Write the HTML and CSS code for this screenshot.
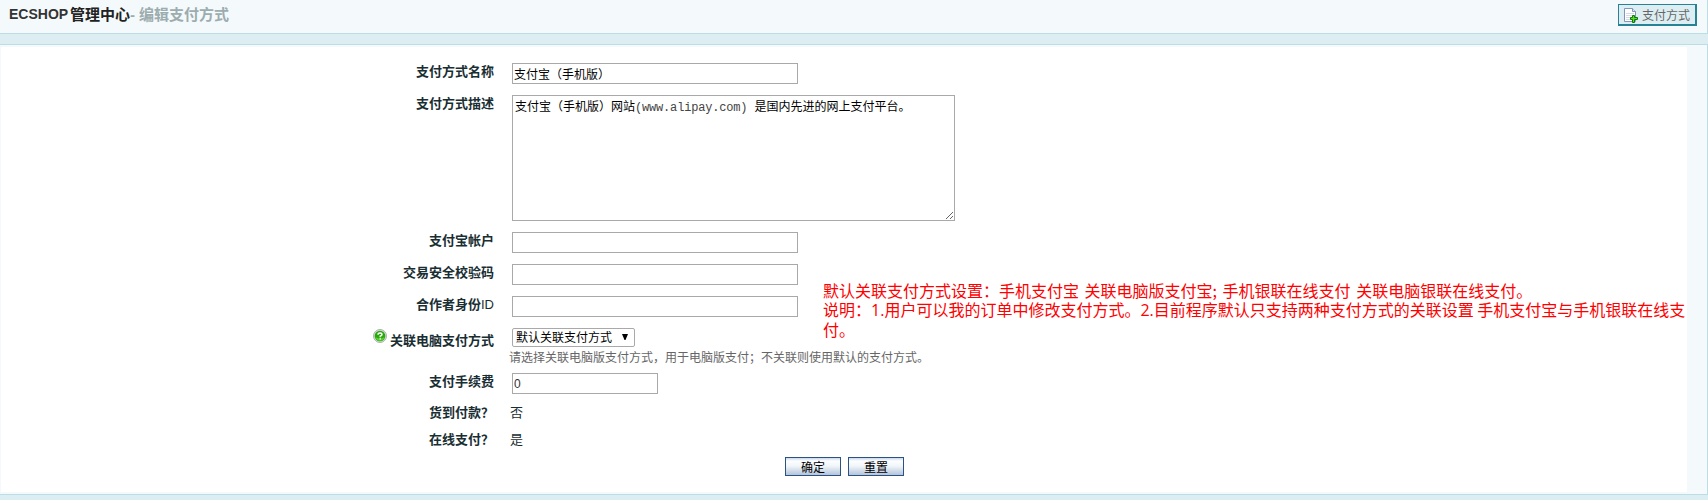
FILE: index.html
```html
<!DOCTYPE html>
<html lang="zh-CN">
<head>
<meta charset="utf-8">
<title>ECSHOP 管理中心 - 编辑支付方式</title>
<link rel="stylesheet" href="styles.css">
</head>
<body>
<header class="topbar">
  <h1 class="title"><span class="brand">ECSHOP</span><span class="site">管理中心</span><span class="crumb"><span class="dash">-</span>编辑支付方式</span></h1>
  <a class="action">
    <svg class="action-icon" width="14" height="15" viewBox="0 0 14 15">
      <path d="M.5.5h8l3 3v10H.5z" fill="#fff" stroke="#8094bd"/>
      <path d="M8.500.5v3h3" fill="#dfe5f3" stroke="#8094bd"/>
      <path d="M2 5.500h8M2 7.500h6M2 9.500h4M2 11.500h4" stroke="#d3d9e5"/>
      <path d="M8.500 7.500h2v2h3v2h-3v3h-2v-3h-2v-2h2z" fill="#5ddd20" stroke="#087a08"/>
    </svg>
    <span>支付方式</span>
  </a>
</header>
<main class="panel">
  <form class="form">
    <div class="row"><label class="label">支付方式名称</label><div class="field"><input class="input" type="text" value="支付宝（手机版）"></div></div>
    <div class="row row-desc"><label class="label">支付方式描述</label><div class="field"><div class="textarea" role="textbox">支付宝（手机版）网站<span class="mono">(www.alipay.com) </span>是国内先进的网上支付平台。</div></div></div>
    <div class="row"><label class="label">支付宝帐户</label><div class="field"><input class="input" type="text"></div></div>
    <div class="row"><label class="label">交易安全校验码</label><div class="field"><input class="input" type="text"></div></div>
    <div class="row"><label class="label">合作者身份<span class="latin">ID</span></label><div class="field"><input class="input" type="text"></div></div>
    <div class="row row-link">
      <label class="label">
        <svg class="help" width="14" height="14" viewBox="0 0 14 14">
          <circle cx="7" cy="7" r="6.500" fill="#d5dcd5" stroke="#a9b3ab"/>
          <circle cx="7" cy="7" r="5.300" fill="#28a80c"/>
          <path d="M2.500 8a4.600 4.600 0 0 0 9 0q-4.500 3-9 0z" fill="#5cd32c"/>
          <path d="M5 5.700Q5 4 7 4t2 1.500Q9 6.600 7.200 7.200V8.200M7.200 9.200v1.300" fill="none" stroke="#fff" stroke-width="1.400"/>
        </svg>关联电脑支付方式</label>
      <div class="field">
        <div class="select"><span>默认关联支付方式</span><svg class="arrow" width="6" height="6" viewBox="0 0 6 6"><path d="M0 0h6L3.500 6h-1z"/></svg></div>
        <p class="hint">请选择关联电脑版支付方式，用于电脑版支付；不关联则使用默认的支付方式。</p>
      </div>
    </div>
    <div class="row"><label class="label">支付手续费</label><div class="field"><input class="input input-short" type="text" value="0"></div></div>
    <div class="row row-text"><span class="label">货到付款？</span><div class="field">否</div></div>
    <div class="row row-text"><span class="label">在线支付？</span><div class="field">是</div></div>
    <div class="buttons"><button class="button" type="button">确定</button><button class="button" type="button">重置</button></div>
  </form>
  <div class="note">
    <p class="note-first">默认关联支付方式设置：手机支付宝 关联电脑版支付宝; 手机银联在线支付 关联电脑银联在线支付。</p>
    <p>说明：<span class="num">1.</span>用户可以我的订单中修改支付方式。<span class="num">2.</span>目前程序默认只支持两种支付方式的关联设置 手机支付宝与手机银联在线支</p>
    <p>付。</p>
  </div>
</main>
</body>
</html>
```
FILE: styles.css
```css
* { box-sizing: border-box; }
body {
  margin: 0;
  height: 500px;
  overflow: hidden;
  background: #ddeef2;
  color: #192e32;
  font: 13px/16px "Liberation Sans", "Noto Sans CJK SC", sans-serif;
}
p { margin: 0; }
.topbar {
  display: flex;
  justify-content: space-between;
  height: 34px;
  padding: 4px 10px 0 9px;
  background: #f4fafb;
  border-right: 1px solid #bbdde5;
  border-bottom: 1px solid #bbdde5;
}
.title {
  display: flex;
  margin: 0;
  font-size: 15px;
  line-height: 21px;
  white-space: nowrap;
}
.brand { width: 61px; font-size: 14px; color: #333; }
.site { color: #222; }
.crumb { display: flex; color: #9cacaf; }
.dash { width: 9px; }
.action {
  display: flex;
  gap: 4px;
  width: 79px;
  height: 22px;
  padding: 3px 0 0 5px;
  background: #ddeef2;
  border: 1px solid #278296;
  border-right-width: 2px;
  border-bottom-width: 2px;
  color: #666;
  font-size: 12px;
  white-space: nowrap;
}
.action span { line-height: 16px; }
.panel {
  position: relative;
  height: 451px;
  margin-top: 10px;
  padding: 2px 20px 2px 1px;
  background: #f4fafb;
  border: 1px solid #bbdde5;
  border-left: 0;
}
.form { height: 445px; padding-top: 11px; background: #fff; }
.row { display: flex; height: 32px; }
.row-desc { height: 137px; }
.row-link { height: 45px; }
.row-text { height: 27px; }
.label {
  width: 493px;
  padding-top: 6px;
  font-weight: bold;
  text-align: right;
  white-space: nowrap;
}
.latin { font-weight: normal; }
.row-link .label { display: flex; justify-content: flex-end; gap: 3px; padding-top: 10px; }
.help { margin-top: -4px; }
.field { padding: 5px 0 0 18px; }
.row-text .label { padding-top: 5px; }
.row-text .field { padding-left: 16px; }
.input, .textarea {
  display: block;
  margin: 0;
  border: 1px solid #a9a9a9;
  border-radius: 0;
  background: #fff;
  color: #000;
  font: 12px/15px "Liberation Sans", "Noto Sans CJK SC", sans-serif;
}
.input { width: 286px; height: 21px; padding: 1px 1px; }
.input-short { width: 146px; padding-top: 2px; color: #333; }
.textarea {
  width: 443px;
  height: 126px;
  padding: 4px 2px;
  overflow: auto;
  resize: both;
}
.mono {
  color: #444;
  font-family: "Liberation Mono", monospace;
  letter-spacing: -0.18px;
  white-space: pre;
}
.select {
  display: flex;
  align-items: center;
  gap: 10px;
  width: 123px;
  height: 19px;
  padding-left: 3px;
  border: 1px solid #a9a9a9;
  border-radius: 2px;
  color: #000;
  font-size: 12px;
  white-space: nowrap;
}
.select span { padding-top: 1px; }
.arrow { margin-top: -1px; }
.hint { margin: 3px 0 0 -3px; color: #666; font-size: 12px; white-space: nowrap; }
.buttons { display: flex; gap: 7px; padding: 3px 0 0 784px; }
.button {
  width: 56px;
  height: 19px;
  padding: 3px 0 0;
  border: 1px solid #2c5283;
  border-radius: 0;
  background: linear-gradient(#c8d8ed 0, #fdfeff 3px, #f1f6f9 8px, #b3c4dc 17px);
  color: #000;
  font: 12px/14px "Liberation Sans", "Noto Sans CJK SC", sans-serif;
}
/* Annotation laid over the right side of the form */
.note {
  position: absolute;
  left: 823px;
  top: 236px;
  color: #f00;
  font: 16px/19px "Noto Sans CJK SC", sans-serif;
  white-space: nowrap;
}
.note-first { word-spacing: 2px; }
.num { font-family: "Open Sans", sans-serif; }
```
